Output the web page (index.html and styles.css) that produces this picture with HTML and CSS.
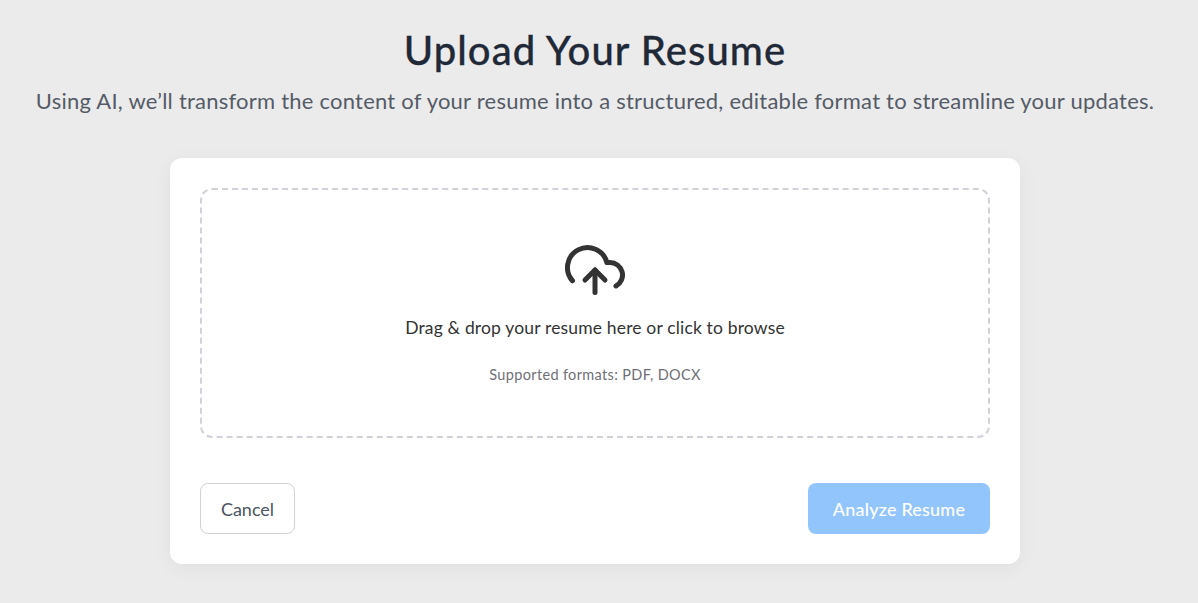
FILE: index.html
```html
<!DOCTYPE html>
<html lang="en">
<head>
<meta charset="utf-8">
<title>Upload Your Resume</title>
<link rel="stylesheet" href="styles.css">
</head>
<body>
<main class="page">
  <header class="intro">
    <h1 class="title">Upload Your Resume</h1>
    <p class="subtitle">Using AI, we’ll transform the content of your resume into a structured, editable format to streamline your updates.</p>
  </header>
  <section class="card">
    <div class="dropzone">
      <svg class="cloud" viewBox="0 0 24 24" fill="none" stroke="currentColor" stroke-width="2" stroke-linecap="round" stroke-linejoin="round" aria-hidden="true">
        <polyline points="16 16 12 12 8 16"/>
        <line x1="12" y1="12" x2="12" y2="21"/>
        <path d="M20.39 18.39A5 5 0 0 0 18 9h-1.26A8 8 0 1 0 3 16.3"/>
      </svg>
      <p class="drop-text">Drag &amp; drop your resume here or click to browse</p>
      <p class="formats">Supported formats: PDF, DOCX</p>
    </div>
    <div class="actions">
      <button class="btn btn-cancel" type="button">Cancel</button>
      <button class="btn btn-primary" type="button">Analyze Resume</button>
    </div>
  </section>
</main>
</body>
</html>
```
FILE: styles.css
```css
* { box-sizing: border-box; }
html, body { margin: 0; padding: 0; }
body {
  height: 603px;
  overflow: hidden;
  background: #ebebeb;
  font-family: "Lato", "Noto Sans", sans-serif;
}
.page {
  display: flex;
  flex-direction: column;
  align-items: center;
  width: 1190px;
  padding-top: 26px;
}
.intro { text-align: center; margin-bottom: 42px; }
.title {
  margin: 0 0 12px;
  font-size: 40px;
  line-height: 48px;
  font-weight: 500;
  letter-spacing: 1.05px;
  -webkit-text-stroke: 0.3px #1f2937;
  color: #1f2937;
}
.subtitle {
  margin: 0;
  font-size: 22px;
  line-height: 30px;
  letter-spacing: 0.23px;
  color: #555b66;
}
.card {
  width: 850px;
  padding: 30px;
  background: #fff;
  border-radius: 12px;
  box-shadow: 0 4px 20px rgba(0, 0, 0, 0.05);
}
.dropzone {
  height: 250px;
  padding-top: 50px;
  display: flex;
  flex-direction: column;
  align-items: center;
  border: 2px dashed #d1d1d9;
  border-radius: 12px;
}
.cloud { width: 60px; height: 60px; color: #333; margin-bottom: 16px; }
.drop-text { margin: 0 0 25px; font-size: 17.5px; line-height: 24px; letter-spacing: 0.16px; color: #333; }
.formats { margin: 0; font-size: 14.5px; line-height: 20px; letter-spacing: 0.35px; color: #6f6f76; }
.actions { display: flex; justify-content: space-between; margin-top: 45px; }
.btn {
  height: 51px;
  font-family: inherit;
  font-size: 18px;
  border-radius: 8px;
}
.btn-cancel { width: 95px; background: #fff; border: 1px solid #d1d1d9; color: #4b5563; }
.btn-primary { width: 182px; background: #93c5fd; border: 0; color: #fff; font-weight: 500; letter-spacing: 0.2px; }
```
